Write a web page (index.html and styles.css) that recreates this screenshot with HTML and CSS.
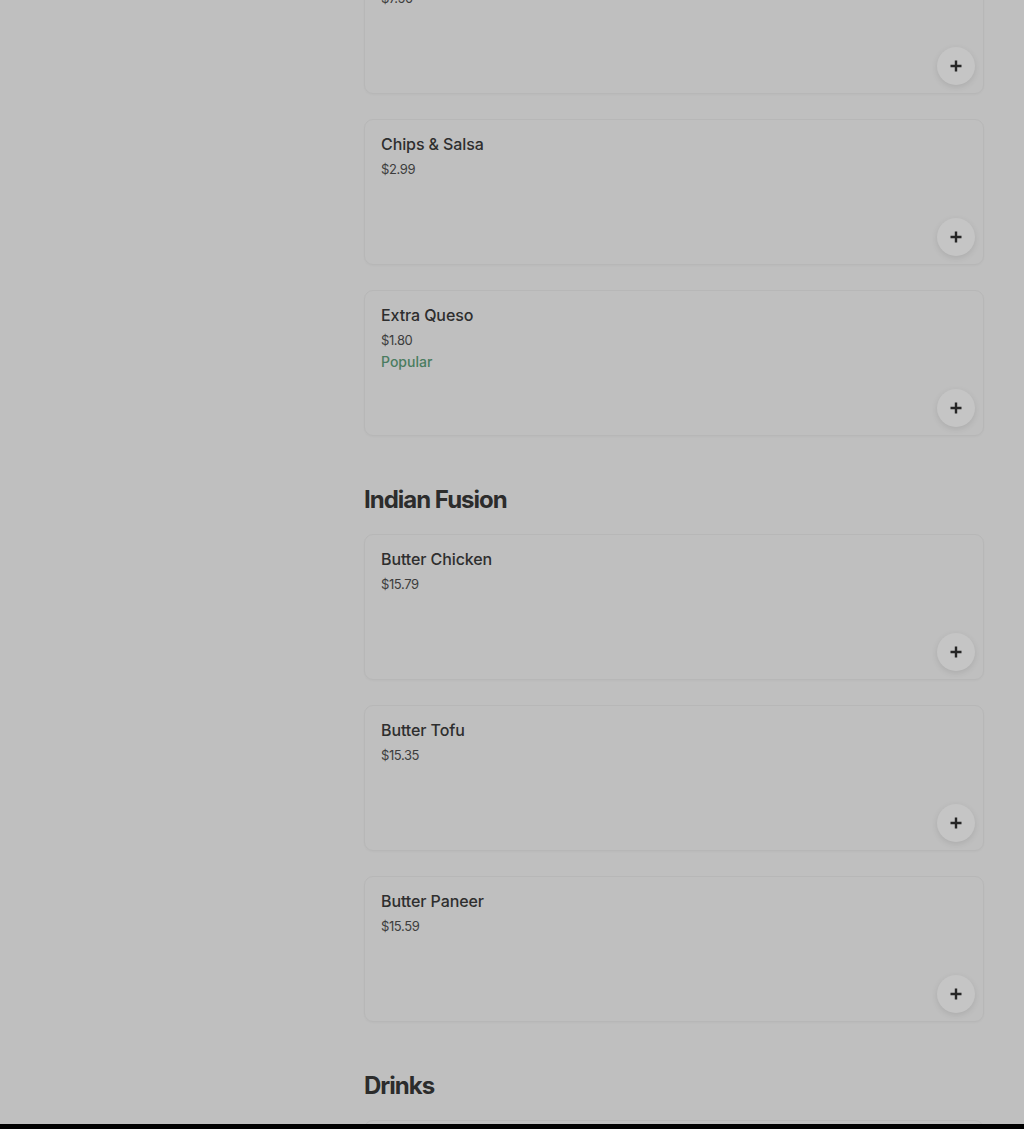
FILE: index.html
```html
<!DOCTYPE html>
<html>
<head>
<meta charset="utf-8">
<link rel="stylesheet" href="styles.css">
</head>
<body>
<div class="viewport">
  <main class="menu">
    <div class="card">
      <div class="title">Nachos</div>
      <div class="price">$7.50</div>
      <button class="add"><svg width="14" height="14" viewBox="0 0 14 14"><path d="M7 1.5v11M1.5 7h11" stroke="#262626" stroke-width="2.4"/></svg></button>
    </div>
    <div class="card">
      <div class="title">Chips &amp; Salsa</div>
      <div class="price">$2.99</div>
      <button class="add"><svg width="14" height="14" viewBox="0 0 14 14"><path d="M7 1.5v11M1.5 7h11" stroke="#262626" stroke-width="2.4"/></svg></button>
    </div>
    <div class="card">
      <div class="title">Extra Queso</div>
      <div class="price">$1.80</div>
      <div class="tag">Popular</div>
      <button class="add"><svg width="14" height="14" viewBox="0 0 14 14"><path d="M7 1.5v11M1.5 7h11" stroke="#262626" stroke-width="2.4"/></svg></button>
    </div>
    <h2 class="section">Indian Fusion</h2>
    <div class="card">
      <div class="title">Butter Chicken</div>
      <div class="price">$15.79</div>
      <button class="add"><svg width="14" height="14" viewBox="0 0 14 14"><path d="M7 1.5v11M1.5 7h11" stroke="#262626" stroke-width="2.4"/></svg></button>
    </div>
    <div class="card">
      <div class="title">Butter Tofu</div>
      <div class="price">$15.35</div>
      <button class="add"><svg width="14" height="14" viewBox="0 0 14 14"><path d="M7 1.5v11M1.5 7h11" stroke="#262626" stroke-width="2.4"/></svg></button>
    </div>
    <div class="card">
      <div class="title">Butter Paneer</div>
      <div class="price">$15.59</div>
      <button class="add"><svg width="14" height="14" viewBox="0 0 14 14"><path d="M7 1.5v11M1.5 7h11" stroke="#262626" stroke-width="2.4"/></svg></button>
    </div>
    <h2 class="section">Drinks</h2>
    <div class="card">
      <div class="title">Mango Lassi</div>
      <div class="price">$4.99</div>
    </div>
  </main>
</div>
<div class="bottom-bar"></div>
</body>
</html>
```

FILE: styles.css
```css
html, body {
  margin: 0;
  padding: 0;
  background: #bfbfbf;
  font-family: Inter, "Noto Sans", "Liberation Sans", sans-serif;
  color: #333;
}
.viewport {
  height: 1124px;
  overflow: hidden;
}
.menu {
  width: 620px;
  margin: -52px 0 0 364px;
  display: flex;
  flex-direction: column;
}
.card {
  position: relative;
  box-sizing: border-box;
  height: 146px;
  border: 1px solid #b7b7b7;
  border-radius: 9px;
  padding: 14px 16px;
  margin-bottom: 25px;
  box-shadow: 0 1px 2px rgba(0,0,0,0.03);
}
.card:has(+ .section) { margin-bottom: 0; }
.title {
  font-size: 16px;
  font-weight: 500;
  line-height: 20px;
  color: #2e2e2e;
  letter-spacing: -0.1px;
}
.price {
  margin-top: 6px;
  font-size: 13px;
  line-height: 18px;
  color: #3d3d3d;
  letter-spacing: -0.4px;
}
.tag {
  margin-top: 4px;
  font-size: 14px;
  font-weight: 500;
  line-height: 18px;
  color: #4a7c60;
}
.add {
  position: absolute;
  right: 8px;
  bottom: 8px;
  width: 38px;
  height: 38px;
  border-radius: 50%;
  border: none;
  padding: 0;
  background: #c5c5c5;
  box-shadow: 0 2px 6px rgba(0,0,0,0.1);
  display: flex;
  align-items: center;
  justify-content: center;
}
.section {
  margin: 48px 0 18px 0;
  font-size: 24px;
  font-weight: 700;
  line-height: 32px;
  letter-spacing: -1px;
  color: #2c2c2c;
}
.bottom-bar {
  height: 5px;
  background: #000;
}
```
